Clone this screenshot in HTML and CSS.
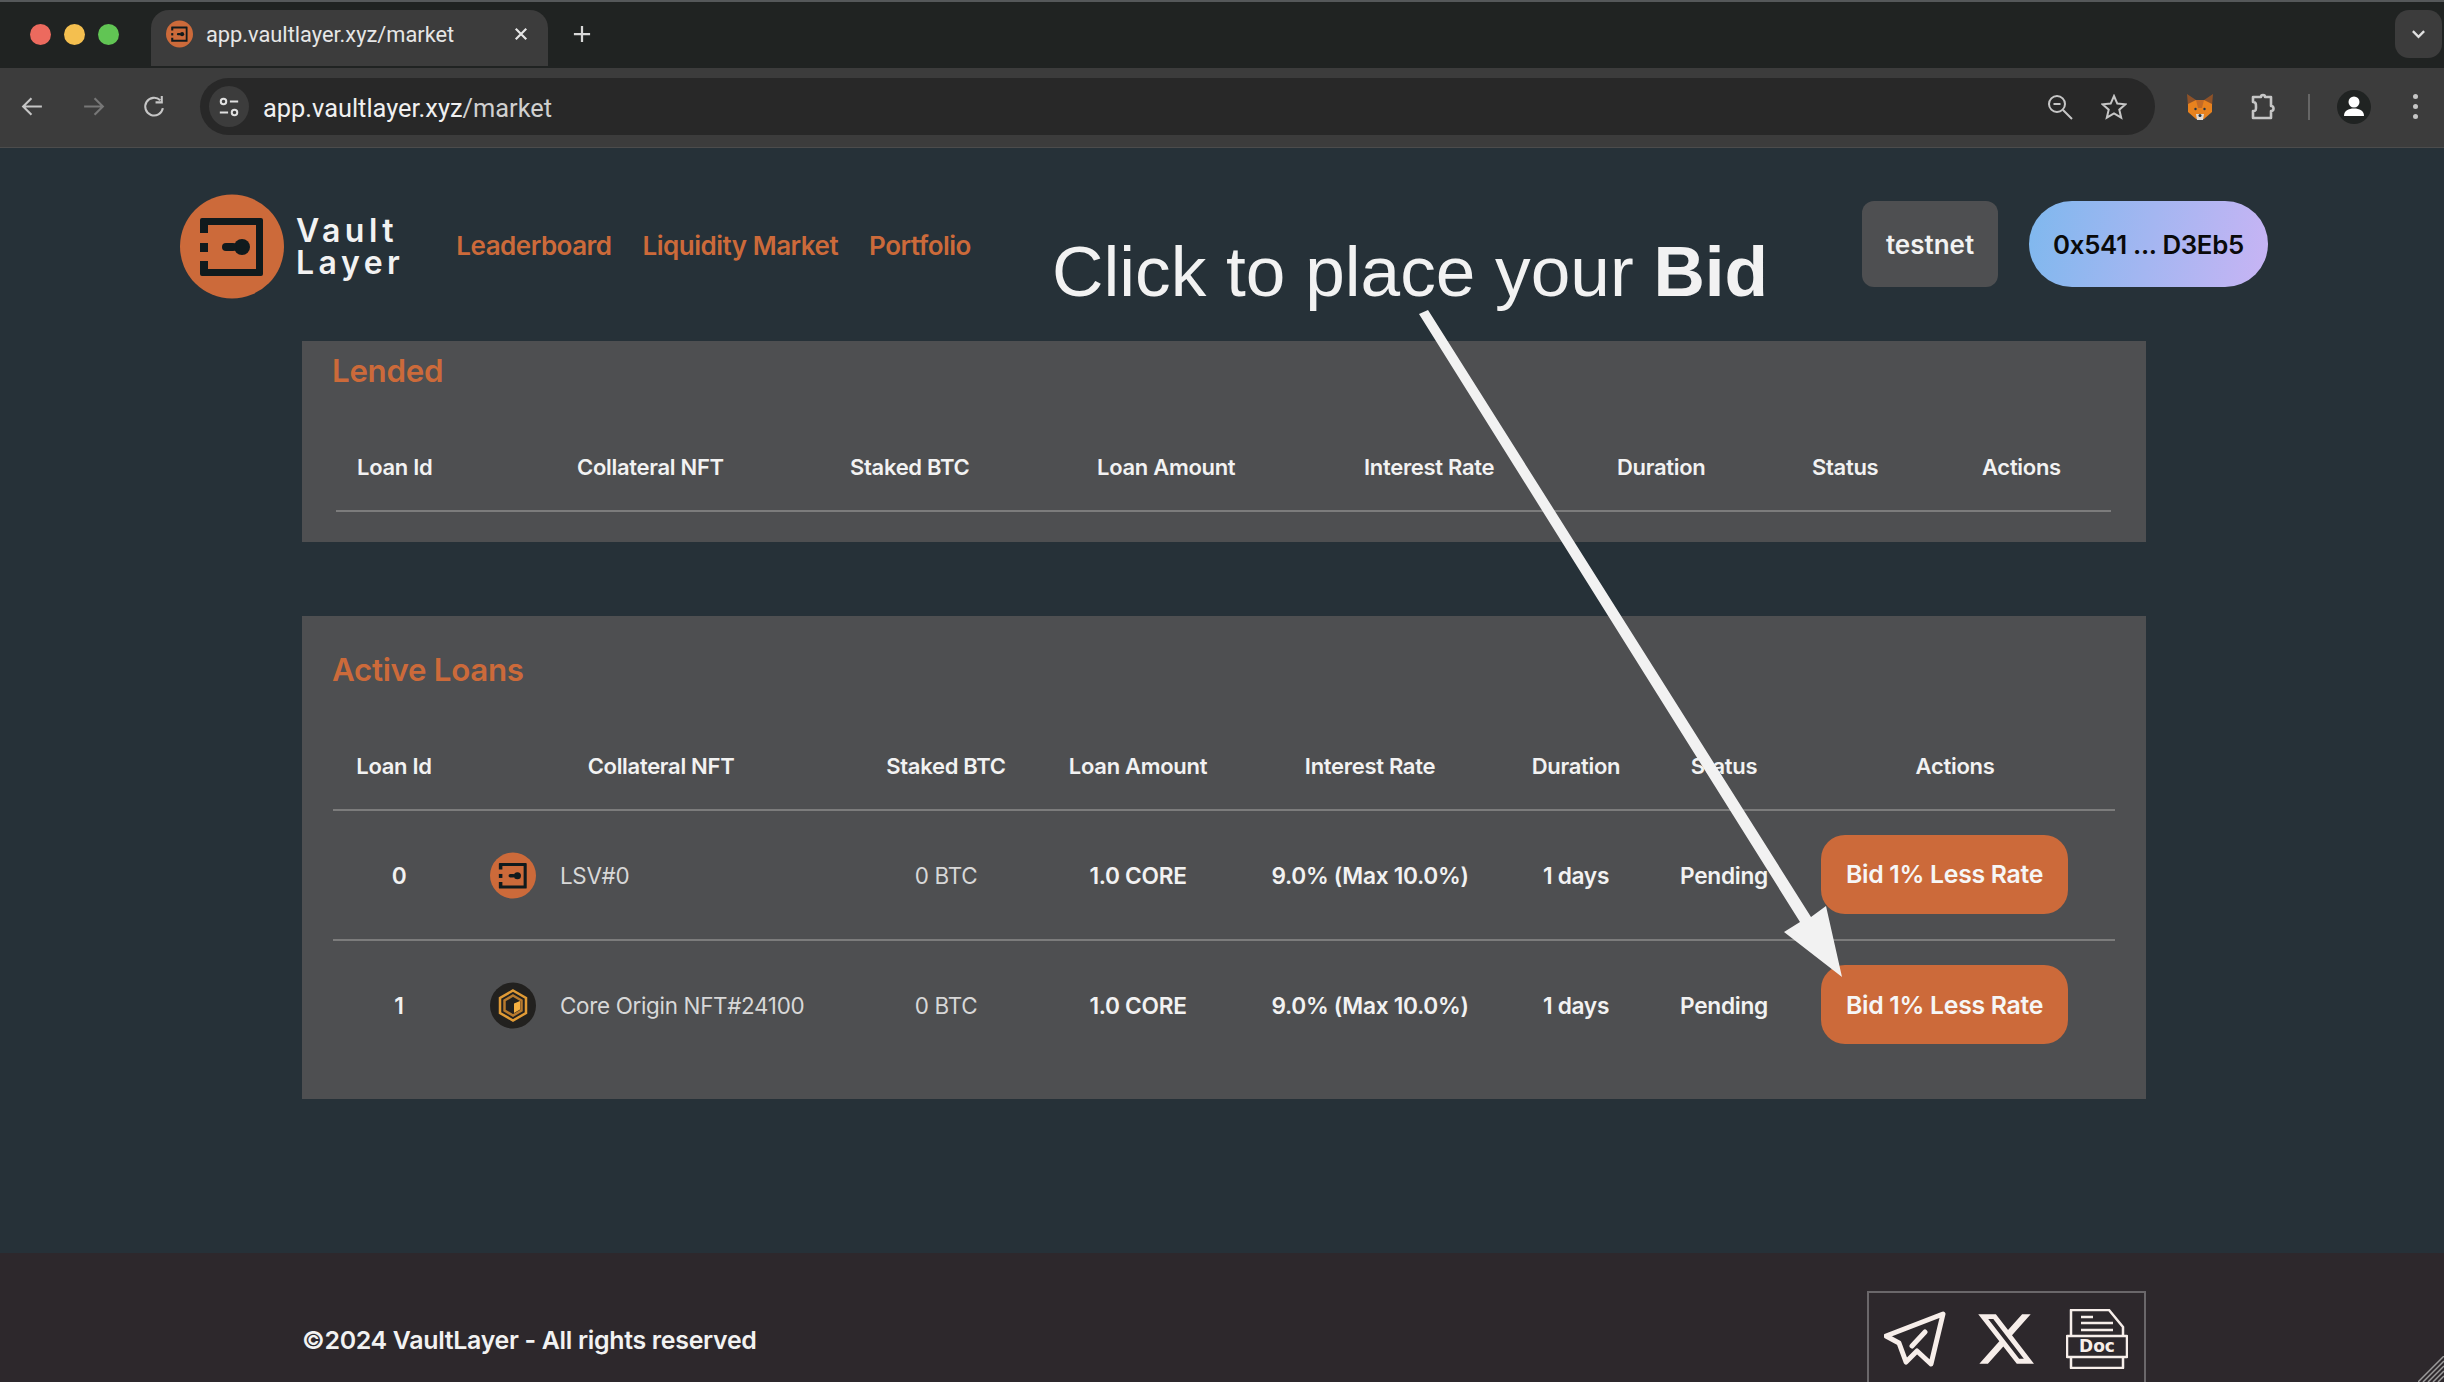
FILE: index.html
```html
<!DOCTYPE html>
<html lang="en">
<head>
  <meta charset="UTF-8">
  <title>app.vaultlayer.xyz/market</title>
  <link rel="stylesheet" href="styles.css">
</head>
<body>
  <div class="tabstrip">
    <div class="lights">
      <span class="light red"></span>
      <span class="light yellow"></span>
      <span class="light green"></span>
    </div>
    <div class="tab">
      <svg class="favicon" viewBox="0 0 104 105">
        <use href="#vault-logo"/>
      </svg>
      <span class="tab-title">app.vaultlayer.xyz/market</span>
      <svg class="tab-close" viewBox="0 0 16 16"><path d="M2 2l12 12M14 2L2 14"/></svg>
    </div>
    <svg class="tab-new" viewBox="0 0 20 20"><path d="M10 1v18M1 10h18"/></svg>
    <div class="tab-search">
      <svg viewBox="0 0 16 10"><path d="M2 2l6 6 6-6"/></svg>
    </div>
  </div>

  <div class="toolbar">
    <svg class="tool-icon" viewBox="0 0 24 24"><path d="M21 12H4M11 4l-8 8 8 8"/></svg>
    <svg class="tool-icon dim" viewBox="0 0 24 24"><path d="M3 12h17M13 4l8 8-8 8"/></svg>
    <svg class="tool-icon" viewBox="0 0 24 24"><path d="M20 13.500A8.500 8.500 0 1 1 17.500 6M19 2v6h-6"/></svg>
    <div class="omnibox">
      <div class="site-info">
        <svg viewBox="0 0 24 24"><circle cx="6" cy="6" r="3"/><path d="M13 6h9M2 18h9"/><circle cx="18" cy="18" r="3"/></svg>
      </div>
      <span class="url">app.vaultlayer.xyz<span class="url-path">/market</span></span>
      <svg class="omni-icon zoom-out" viewBox="0 0 26 26"><circle cx="10" cy="10" r="8"/><path d="M16 16l9 9M6.500 10h7"/></svg>
      <svg class="omni-icon star" viewBox="0 0 26 26"><path d="M13 2l3.300 7.600 8.200.7-6.200 5.400 1.900 8L13 19.500l-7.200 4.200 1.900-8L1.500 10.300l8.200-.7z"/></svg>
    </div>
    <svg class="fox" viewBox="0 0 26 26">
      <path fill="#8f5228" d="M0 0l9 6h8l9-6-1 12H1z"/>
      <path fill="#e8821e" d="M1 10l8-4h8l8 4v8l-8 7H9l-8-7z"/>
      <path fill="#c26a26" d="M9 6h8l-2 8h-4z"/>
      <circle cx="8.500" cy="15" r="1.200" fill="#233447"/>
      <circle cx="17.500" cy="15" r="1.200" fill="#233447"/>
      <path fill="#e0d8d0" d="M9 20h8l-1 6h-6z"/>
      <circle cx="13" cy="21.500" r="1.500" fill="#233447"/>
    </svg>
    <svg class="puzzle" viewBox="0 0 27 27"><path d="M3 4h8a2 2 0 0 1 4 0h6v9a2.500 2.500 0 0 1 0 5v7H3v-7c3 0 3-1 3-4s0-5-3-5z"/></svg>
    <span class="tool-sep"></span>
    <div class="avatar">
      <svg viewBox="0 0 34 34"><circle cx="17" cy="12" r="5.500"/><path d="M7 26c0-5.500 4.500-7.500 10-7.500s10 2 10 7.500z"/></svg>
    </div>
    <div class="kebab"><span></span><span></span><span></span></div>
  </div>

  <main class="page">
    <header class="site-header">
      <svg class="logo" viewBox="0 0 104 105">
        <g id="vault-logo">
          <circle cx="52" cy="52.500" r="52" fill="#cc6a3a"/>
          <path fill="#101a1d" fill-rule="evenodd" d="M22 24h59a2 2 0 0 1 2 2v54a2 2 0 0 1-2 2H22a2 2 0 0 1-2-2V67h8v8h48V31H28v8h-8V26a2 2 0 0 1 2-2z"/>
          <rect x="20" y="49" width="8" height="9" fill="#101a1d"/>
          <circle cx="62" cy="53" r="8" fill="#101a1d"/>
          <rect x="42" y="49" width="15" height="8" rx="4" fill="#101a1d"/>
        </g>
      </svg>
      <div class="brand">Vault<br>Layer</div>
      <nav class="nav">
        <a>Leaderboard</a>
        <a>Liquidity Market</a>
        <a>Portfolio</a>
      </nav>
      <div class="header-right">
        <button class="network">testnet</button>
        <button class="wallet">0x541 ... D3Eb5</button>
      </div>
    </header>

    <section class="panel lended">
      <h2>Lended</h2>
      <table class="lended-table">
        <colgroup>
          <col class="l1"><col class="l2"><col class="l3"><col class="l4"><col class="l5"><col class="l6"><col class="l7"><col class="l8">
        </colgroup>
        <thead>
          <tr>
            <th>Loan Id</th><th>Collateral NFT</th><th>Staked BTC</th><th>Loan Amount</th>
            <th>Interest Rate</th><th>Duration</th><th>Status</th><th>Actions</th>
          </tr>
        </thead>
      </table>
    </section>

    <section class="panel active">
      <h2>Active Loans</h2>
      <table class="active-table">
        <colgroup>
          <col class="a1"><col class="a2"><col class="a3"><col class="a4"><col class="a5"><col class="a6"><col class="a7"><col class="a8">
        </colgroup>
        <thead>
          <tr>
            <th class="id-head">Loan Id</th><th>Collateral NFT</th><th>Staked BTC</th><th>Loan Amount</th>
            <th>Interest Rate</th><th>Duration</th><th>Status</th><th>Actions</th>
          </tr>
        </thead>
        <tbody>
          <tr>
            <td>0</td>
            <td>
              <div class="nft">
                <svg class="nft-icon" viewBox="0 0 104 105"><use href="#vault-logo"/></svg>
                <span>LSV#0</span>
              </div>
            </td>
            <td class="light-cell">0 BTC</td>
            <td>1.0 CORE</td>
            <td>9.0% (Max 10.0%)</td>
            <td>1 days</td>
            <td>Pending</td>
            <td class="action-cell"><button class="bid">Bid 1% Less Rate</button></td>
          </tr>
          <tr>
            <td>1</td>
            <td>
              <div class="nft">
                <svg class="nft-icon" viewBox="0 0 46 46">
                  <circle cx="23" cy="23" r="23" fill="#22211f"/>
                  <path fill="none" stroke="#e09a35" stroke-width="2.500" d="M23 8l13 7.500v15L23 38l-13-7.500v-15z"/>
                  <path fill="none" stroke="#b87a2e" stroke-width="2.500" d="M23 13l8.500 5v10L23 33l-8.500-5V18z"/>
                  <path fill="#f5b041" d="M24 21l6-2.500v8.500l-6 3.500z"/>
                </svg>
                <span>Core Origin NFT#24100</span>
              </div>
            </td>
            <td class="light-cell">0 BTC</td>
            <td>1.0 CORE</td>
            <td>9.0% (Max 10.0%)</td>
            <td>1 days</td>
            <td>Pending</td>
            <td class="action-cell"><button class="bid">Bid 1% Less Rate</button></td>
          </tr>
        </tbody>
      </table>
    </section>

    <footer class="footer">
      <span class="copyright">©2024 VaultLayer - All rights reserved</span>
      <div class="socials">
        <svg class="social" width="62" height="56" viewBox="0 0 62 56">
          <path d="M2 25L59 3 47 53 33 40 22 51 15 32zM28 35l13-14"/>
        </svg>
        <svg class="social-x" width="62" height="56" viewBox="0 0 24 22" preserveAspectRatio="none">
          <path d="M18.244 1.250h3.308l-7.227 8.260 8.502 11.240H16.170l-5.214-6.817L4.990 20.750H1.680l7.730-8.835L1.254 1.250H8.080l4.713 6.231zm-1.161 17.520h1.833L7.084 3.126H5.117z"/>
        </svg>
        <svg class="social doc" width="62" height="60" viewBox="0 0 62 60">
          <path d="M5 26V1h38l14 17v8M1 27h60v21H1zM5 48v11h52V48M15 8h12M15 14h32M15 21h32"/>
          <text x="31" y="43" text-anchor="middle">Doc</text>
        </svg>
      </div>
      <svg class="grip" viewBox="0 0 26 26"><path d="M0 26L26 0M5 26L26 5M10 26L26 10M15 26L26 15M20 26l6-6"/></svg>
    </footer>
  </main>

  <!-- annotation drawn over the page -->
  <div class="callout">Click to place your <b>Bid</b></div>
  <svg class="arrow" viewBox="0 0 2444 1382">
    <path d="M1419 314L1428 310L1811 917L1826 906L1842 977L1784 932L1800 922Z"/>
  </svg>
</body>
</html>
```

FILE: styles.css
```css
* {
  box-sizing: border-box;
}

html, body {
  margin: 0;
  width: 2444px;
  height: 1382px;
  overflow: hidden;
}

body {
  display: flex;
  flex-direction: column;
  position: relative;
  background: #263138;
  font-family: Inter, "Noto Sans", sans-serif;
  color: #f2f2f2;
}

/* browser chrome */
.tabstrip {
  height: 68px;
  flex: none;
  display: flex;
  align-items: flex-start;
  background: #202322;
  border-top: 2px solid #55585a;
  font-family: Roboto, sans-serif;
}

.lights {
  display: flex;
  gap: 13px;
  width: 151px;
  padding: 22px 0 0 30px;
}

.light {
  width: 21px;
  height: 21px;
  border-radius: 50%;
}

.red { background: #ec6a5e; }
.yellow { background: #f4bf4f; }
.green { background: #61c554; }

.tab {
  width: 397px;
  height: 56px;
  margin-top: 8px;
  display: flex;
  align-items: center;
  padding: 0 20px 8px 15px;
  background: #3c3c3c;
  border-radius: 18px 18px 0 0;
}

.favicon {
  width: 27px;
  height: 28px;
  flex: none;
}

.tab-title {
  margin-left: 13px;
  font-size: 21.800px;
  color: #e6e6e6;
  white-space: nowrap;
}

.tab-close {
  width: 14px;
  height: 14px;
  margin-left: auto;
  fill: none;
  stroke: #e6e6e6;
  stroke-width: 2.500;
}

.tab-new {
  width: 18px;
  height: 18px;
  margin: 23px 0 0 25px;
  fill: none;
  stroke: #d8d8d8;
  stroke-width: 2.500;
}

.tab-search {
  width: 47px;
  height: 48px;
  margin: 8px 2px 0 auto;
  display: flex;
  align-items: center;
  justify-content: center;
  background: #3c3c3c;
  border-radius: 14px;
}

.tab-search svg {
  width: 15px;
  height: 10px;
  fill: none;
  stroke: #e0e0e0;
  stroke-width: 2.500;
}

.toolbar {
  height: 80px;
  flex: none;
  display: flex;
  align-items: center;
  padding: 0 0 2px 20px;
  background: #3c3c3c;
  border-bottom: 1px solid #4c4c4c;
}

.tool-icon {
  width: 25px;
  height: 25px;
  margin-right: 36px;
  fill: none;
  stroke: #c6c6c6;
  stroke-width: 2;
}

.tool-icon.dim {
  stroke: #777;
}

.tool-icon:nth-child(3) {
  margin-right: 33px;
}

.omnibox {
  width: 1955px;
  height: 57px;
  display: flex;
  align-items: center;
  padding-left: 9px;
  background: #282828;
  border-radius: 29px;
  font-family: Roboto, sans-serif;
}

.site-info {
  width: 40px;
  height: 41px;
  display: flex;
  align-items: center;
  justify-content: center;
  background: #3c3c3c;
  border-radius: 50%;
}

.site-info svg {
  width: 22px;
  height: 22px;
  fill: none;
  stroke: #e0e0e0;
  stroke-width: 2.200;
}

.url {
  margin: 2px 0 0 14px;
  font-size: 25.400px;
  color: #f0f0f0;
}

.url-path {
  color: #d0d0d0;
}

.omni-icon {
  width: 26px;
  height: 26px;
  fill: none;
  stroke: #c6c6c6;
  stroke-width: 2;
}

.zoom-out {
  margin-left: auto;
}

.star {
  margin: 0 28px 0 28px;
}

.fox {
  width: 26px;
  height: 26px;
  margin-left: 32px;
}

.puzzle {
  width: 27px;
  height: 27px;
  margin-left: 37px;
  fill: none;
  stroke: #c6c6c6;
  stroke-width: 2.600;
  stroke-linejoin: round;
}

.tool-sep {
  width: 2px;
  height: 26px;
  margin-left: 31px;
  background: #666;
}

.avatar {
  width: 34px;
  height: 34px;
  margin-left: 27px;
  background: #202322;
  border-radius: 50%;
}

.avatar svg {
  display: block;
  fill: #fff;
}

.kebab {
  display: flex;
  flex-direction: column;
  gap: 5px;
  margin-left: 42px;
}

.kebab span {
  width: 5px;
  height: 5px;
  background: #c6c6c6;
  border-radius: 50%;
}

/* page */
.page {
  flex: 1;
  min-height: 0;
  display: flex;
  flex-direction: column;
  overflow: hidden;
}

.site-header {
  height: 105px;
  flex: none;
  margin-top: 46px;
  padding: 0 176px 0 180px;
  display: flex;
  align-items: center;
}

.logo {
  width: 104px;
  height: 105px;
  flex: none;
}

.brand {
  margin-left: 12px;
  font-size: 32px;
  line-height: 32px;
  font-weight: 600;
  letter-spacing: 4.500px;
  color: #f2f2f2;
}

.nav {
  display: flex;
  gap: 31px;
  margin: 0 0 2px 52px;
  font-size: 26px;
  font-weight: 600;
  letter-spacing: -0.500px;
  color: #cc6a3a;
}

.header-right {
  margin: 0 0 5px auto;
  display: flex;
  gap: 31px;
}

button {
  border: none;
  font-family: inherit;
  font-weight: 600;
  padding: 0;
}

.network {
  width: 136px;
  height: 86px;
  background: #4e4f51;
  border-radius: 12px;
  color: #f2f2f2;
  font-size: 26px;
}

.wallet {
  width: 239px;
  height: 86px;
  background: linear-gradient(100deg, #7fb8ee, #c8b4f4);
  border-radius: 43px;
  color: #0a0a0a;
  font-size: 25.800px;
  letter-spacing: -0.300px;
}

.panel {
  width: 1844px;
  margin-left: 302px;
  flex: none;
  background: #4e4f51;
}

.panel h2 {
  margin: 0 0 32px 30px;
  font-size: 31.300px;
  line-height: 40px;
  font-weight: 600;
  letter-spacing: -0.300px;
  color: #cc6a3a;
}

.lended {
  height: 201px;
  margin-top: 42px;
  padding-top: 10px;
}

.active {
  height: 483px;
  margin-top: 74px;
  padding-top: 34px;
}

table {
  table-layout: fixed;
  border-collapse: collapse;
  font-size: 22px;
}

th {
  height: 88px;
  padding: 1px 0 0;
  font-weight: 600;
  letter-spacing: -0.300px;
  white-space: nowrap;
  border-bottom: 2px solid #7c7c7c;
}

.lended-table {
  width: 1775px;
  margin-left: 34px;
}

.lended-table th {
  text-align: left;
}

.lended-table th:first-child {
  padding-left: 21px;
}

.l1 { width: 241px; }
.l2 { width: 273px; }
.l3 { width: 247px; }
.l4 { width: 267px; }
.l5 { width: 253px; }
.l6 { width: 195px; }
.l7 { width: 170px; }
.l8 { width: 129px; }

.active-table {
  width: 1782px;
  margin-left: 31px;
}

.a1 { width: 132px; }
.a2 { width: 392px; }
.a3 { width: 178px; }
.a4 { width: 206px; }
.a5 { width: 258px; }
.a6 { width: 154px; }
.a7 { width: 142px; }
.a8 { width: 320px; }

.id-head {
  padding-right: 10px;
}

td {
  height: 130px;
  padding: 0;
  text-align: center;
  font-size: 22.700px;
  font-weight: 600;
  white-space: nowrap;
  letter-spacing: -0.300px;
}

tbody tr:first-child td {
  border-bottom: 2px solid #7c7c7c;
}

.light-cell {
  font-size: 22.400px;
  font-weight: 400;
  color: #d8d8d8;
}

.nft {
  display: flex;
  align-items: center;
  gap: 24px;
  padding-left: 25px;
  font-size: 22.400px;
  font-weight: 400;
  color: #d8d8d8;
}

.nft-icon {
  width: 46px;
  height: 47px;
  flex: none;
}

.action-cell {
  text-align: left;
  padding: 0 0 2px 26px;
}

.bid {
  width: 247px;
  height: 79px;
  background: #cc6a3a;
  border-radius: 24px;
  color: #f6f6f6;
  font-size: 24.800px;
  letter-spacing: -0.300px;
}

.footer {
  height: 129px;
  flex: none;
  margin-top: auto;
  padding: 43px 298px 0 302px;
  display: flex;
  align-items: center;
  justify-content: space-between;
  position: relative;
  background: #2d282c;
}

.copyright {
  font-size: 24.900px;
  font-weight: 600;
  letter-spacing: -0.300px;
  padding-top: 2px;
}

.socials {
  width: 279px;
  height: 96px;
  flex: none;
  display: flex;
  align-items: center;
  justify-content: space-between;
  padding: 0 16px 0 15px;
  border: 2px solid #6a676a;
}

.social {
  fill: none;
  stroke: #f7eeea;
  stroke-width: 5;
  stroke-linejoin: round;
  stroke-linecap: round;
}

.social-x {
  fill: #f7eeea;
}

.doc {
  stroke-width: 2.500;
  stroke-linecap: butt;
}

.doc text {
  fill: #f7eeea;
  stroke: none;
  font-size: 17px;
  font-weight: 700;
  font-family: "DejaVu Sans", sans-serif;
}

.grip {
  position: absolute;
  right: 0;
  bottom: 0;
  width: 26px;
  height: 26px;
  fill: none;
  stroke: #9a9a9a;
  stroke-width: 1.500;
}

/* annotation over the page */
.callout {
  position: absolute;
  left: 1052px;
  top: 228px;
  font-family: "Liberation Sans", Arial, sans-serif;
  font-size: 71.200px;
  line-height: 88px;
  white-space: nowrap;
  color: #f2f2f2;
}

.arrow {
  position: absolute;
  left: 0;
  top: 0;
  width: 2444px;
  height: 1382px;
  fill: #f2f2f2;
  pointer-events: none;
}
```
